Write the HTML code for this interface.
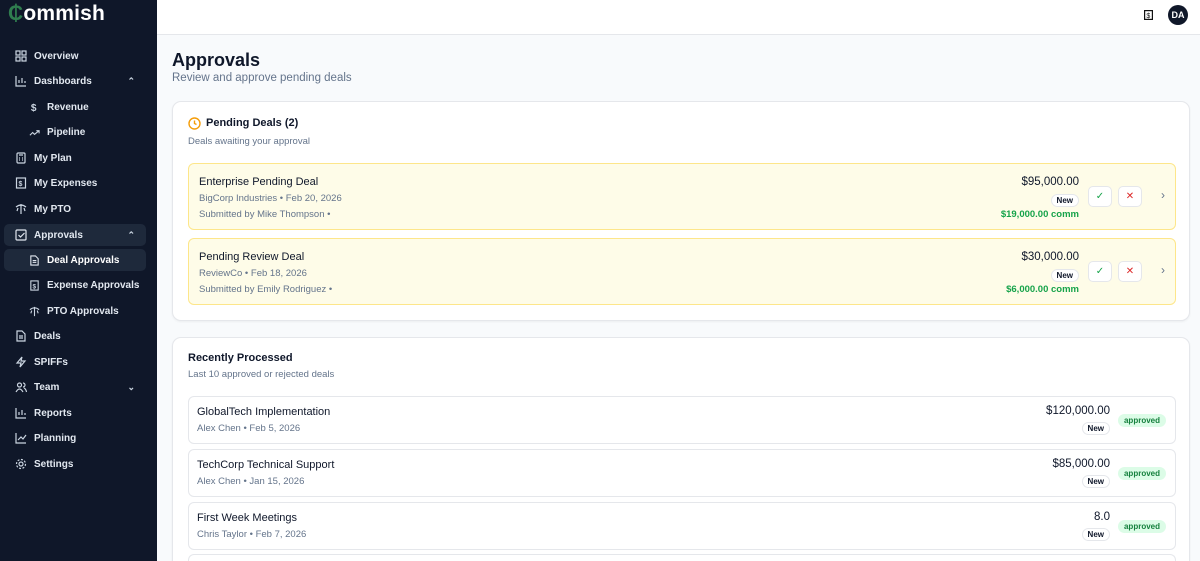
<!DOCTYPE html>
<html><head><meta charset="utf-8"><style>
*{box-sizing:border-box;margin:0;padding:0}
html{width:1200px;height:561px;overflow:hidden}
body{width:1200px;height:561px;overflow:hidden;font-family:"Liberation Sans",sans-serif;background:#f8fafc;position:relative;color:#0f172a}
.sb{position:absolute;left:0;top:0;width:157px;height:561px;background:#0f1729;color:#e2e8f0}
.logo{position:absolute;left:8px;top:2px;font-size:21px;font-weight:bold;color:#fff;letter-spacing:0.2px}
.logo span{color:#2f7d4f}
.it{position:absolute;left:4px;width:142px;height:22px;font-size:10px;font-weight:bold;display:flex;align-items:center;border-radius:5px}
.it svg{position:absolute;left:11px;width:12px;height:12px}
.it .t{position:absolute;left:30px}
.it.s svg{left:25px;width:11px;height:11px}
.it.s .t{left:43px}
.it .ch{position:absolute;right:11px;font-size:9px;color:#cbd5e1}
.act{background:#1e293b}
.hdr{position:absolute;left:157px;top:0;right:0;height:35px;background:#fff;border-bottom:1px solid #e5e7eb}
.av{position:absolute;right:12px;top:5px;width:20px;height:20px;border-radius:50%;background:#0f1729;color:#fff;font-size:9px;font-weight:bold;display:flex;align-items:center;justify-content:center}
h1{position:absolute;left:172px;top:50px;font-size:18px;font-weight:bold}
.sub{position:absolute;left:172px;top:72px;font-size:11.5px;color:#64748b}
.card{position:absolute;left:172px;width:1018px;background:#fff;border:1px solid #e5e7eb;border-radius:9px;box-shadow:0 1px 2px rgba(0,0,0,.05);overflow:hidden}
.ct{position:absolute;left:15px;font-size:11px;font-weight:bold}
.cs{position:absolute;left:15px;font-size:9.5px;color:#64748b}
.deal{position:absolute;left:15px;width:988px;height:67px;background:#fefce8;border:1px solid #fde68a;border-radius:6px}
.row{position:absolute;left:15px;width:988px;height:48px;background:#fff;border:1px solid #e5e7eb;border-radius:6px}
.nm{position:absolute;left:10px;font-size:11px}
.mt{position:absolute;left:10px;font-size:9.5px;color:#64748b}
.amt{position:absolute;font-size:11.5px;text-align:right}
.new{position:absolute;font-size:8px;font-weight:bold;border:1px solid #e5e7eb;border-radius:8px;background:#fff;padding:1px 5px;height:13px;line-height:10px}
.comm{position:absolute;font-size:9.5px;color:#16a34a;font-weight:bold}
.btn{position:absolute;width:24px;height:21px;border:1px solid #e5e7eb;border-radius:5px;background:#fff;font-size:10px;display:flex;align-items:center;justify-content:center}
.apr{position:absolute;right:9px;font-size:8px;color:#15803d;background:#dcfce7;border-radius:8px;padding:2px 6px;font-weight:bold}
</style></head><body>
<div class="sb">
<div class="logo"><span>₵</span>ommish</div>
<div class="it" style="top:45px"><svg viewBox="0 0 12 12" fill="none" stroke="#cbd5e1" stroke-width="1.2"><rect x="1" y="1" width="4" height="4"/><rect x="7" y="1" width="4" height="4"/><rect x="1" y="7" width="4" height="4"/><rect x="7" y="7" width="4" height="4"/></svg><span class="t">Overview</span></div>
<div class="it" style="top:70px"><svg viewBox="0 0 12 12" fill="none" stroke="#cbd5e1" stroke-width="1.2"><path d="M1 1v10h10M4 8V5M7 8V3M10 8V6"/></svg><span class="t">Dashboards</span><span class="ch">⌃</span></div>
<div class="it s" style="top:96px"><svg viewBox="0 0 12 12"><text x="2" y="10" font-size="11" fill="#cbd5e1">$</text></svg><span class="t">Revenue</span></div>
<div class="it s" style="top:121px"><svg viewBox="0 0 12 12" fill="none" stroke="#cbd5e1" stroke-width="1.2"><path d="M1 9l3-3 2 2 5-4M8 4h3v3"/></svg><span class="t">Pipeline</span></div>
<div class="it" style="top:147px"><svg viewBox="0 0 12 12" fill="none" stroke="#cbd5e1" stroke-width="1.2"><rect x="2" y="1" width="8" height="10" rx="1"/><path d="M4 3h4M4 6h1M7 6h1M4 8h1M7 8h1"/></svg><span class="t">My Plan</span></div>
<div class="it" style="top:172px"><svg viewBox="0 0 12 12" fill="none" stroke="#cbd5e1" stroke-width="1.2"><rect x="1.5" y="1" width="9" height="10"/><text x="3.5" y="9" font-size="7" fill="#cbd5e1" stroke="none">$</text></svg><span class="t">My Expenses</span></div>
<div class="it" style="top:198px"><svg viewBox="0 0 12 12" fill="none" stroke="#cbd5e1" stroke-width="1.2"><path d="M1 4q5-4 10 0M6 1v10M3 5l-1 3M9 5l1 3"/></svg><span class="t">My PTO</span></div>
<div class="it act" style="top:224px"><svg viewBox="0 0 12 12" fill="none" stroke="#e2e8f0" stroke-width="1.2"><rect x="1" y="1" width="10" height="10" rx="1"/><path d="M3.5 6l2 2 4-4"/></svg><span class="t">Approvals</span><span class="ch">⌃</span></div>
<div class="it s act" style="top:249px"><svg viewBox="0 0 12 12" fill="none" stroke="#e2e8f0" stroke-width="1.2"><path d="M2 1h5l3 3v7H2z M4 6h4M4 8h4"/></svg><span class="t" style="color:#fff">Deal Approvals</span></div>
<div class="it s" style="top:274px"><svg viewBox="0 0 12 12" fill="none" stroke="#cbd5e1" stroke-width="1.2"><rect x="2" y="1" width="8" height="10"/><text x="3.8" y="9" font-size="7" fill="#cbd5e1" stroke="none">$</text></svg><span class="t">Expense Approvals</span></div>
<div class="it s" style="top:300px"><svg viewBox="0 0 12 12" fill="none" stroke="#cbd5e1" stroke-width="1.2"><path d="M1 4q5-4 10 0M6 1v10M3 5l-1 3M9 5l1 3"/></svg><span class="t">PTO Approvals</span></div>
<div class="it" style="top:325px"><svg viewBox="0 0 12 12" fill="none" stroke="#cbd5e1" stroke-width="1.2"><path d="M2 1h5l3 3v7H2z M4 6h4M4 8h4"/></svg><span class="t">Deals</span></div>
<div class="it" style="top:351px"><svg viewBox="0 0 12 12" fill="none" stroke="#cbd5e1" stroke-width="1.2"><path d="M7 1L2 7h4l-1 4 5-6H6z"/></svg><span class="t">SPIFFs</span></div>
<div class="it" style="top:376px"><svg viewBox="0 0 12 12" fill="none" stroke="#cbd5e1" stroke-width="1.2"><circle cx="4.5" cy="4" r="2"/><path d="M1 11q3.5-6 7 0M8 2a2 2 0 010 4M9 7q2 1 2.5 4"/></svg><span class="t">Team</span><span class="ch">⌄</span></div>
<div class="it" style="top:402px"><svg viewBox="0 0 12 12" fill="none" stroke="#cbd5e1" stroke-width="1.2"><path d="M1 1v10h10M4 8V5M7 8V3M10 8V6"/></svg><span class="t">Reports</span></div>
<div class="it" style="top:427px"><svg viewBox="0 0 12 12" fill="none" stroke="#cbd5e1" stroke-width="1.2"><path d="M1 1v10h10M3 8l3-3 2 2 3-4"/></svg><span class="t">Planning</span></div>
<div class="it" style="top:453px"><svg viewBox="0 0 12 12" fill="none" stroke="#cbd5e1" stroke-width="1.2"><circle cx="6" cy="6" r="2"/><circle cx="6" cy="6" r="4.5" stroke-dasharray="2 1.5"/></svg><span class="t">Settings</span></div>
</div>
<div class="hdr"><svg style="position:absolute;right:47px;top:10px" width="9" height="10" viewBox="0 0 9 10" fill="none" stroke="#111" stroke-width="1.2"><rect x="0.6" y="0.6" width="7.8" height="8.8"/><text x="2.4" y="8" font-size="7" fill="#111" stroke="none">$</text></svg><div class="av">DA</div></div>
<h1>Approvals</h1>
<div class="sub">Review and approve pending deals</div>
<div class="card" style="top:101px;height:220px">
<svg style="position:absolute;left:15px;top:15px" width="13" height="13" viewBox="0 0 13 13" fill="none" stroke="#f59e0b" stroke-width="1.4"><circle cx="6.5" cy="6.5" r="5.5"/><path d="M6.5 3.5v3l2 1"/></svg>
<div class="ct" style="top:15px;left:33px">Pending Deals (2)</div>
<div class="cs" style="top:34px">Deals awaiting your approval</div>
<div class="deal" style="top:61px">
<div class="nm" style="top:12px">Enterprise Pending Deal</div>
<div class="mt" style="top:29px">BigCorp Industries • Feb 20, 2026</div>
<div class="mt" style="top:45px">Submitted by Mike Thompson •</div>
<div class="amt" style="right:96px;top:12px">$95,000.00</div>
<div class="new" style="right:96px;top:30px">New</div>
<div class="comm" style="right:96px;top:45px">$19,000.00 comm</div>
<div class="btn" style="right:63px;top:22px;color:#16a34a">✓</div>
<div class="btn" style="right:33px;top:22px;color:#dc2626">✕</div>
<div style="position:absolute;right:10px;top:24px;font-size:12px;color:#64748b">›</div>
</div>
<div class="deal" style="top:136px">
<div class="nm" style="top:12px">Pending Review Deal</div>
<div class="mt" style="top:29px">ReviewCo • Feb 18, 2026</div>
<div class="mt" style="top:45px">Submitted by Emily Rodriguez •</div>
<div class="amt" style="right:96px;top:12px">$30,000.00</div>
<div class="new" style="right:96px;top:30px">New</div>
<div class="comm" style="right:96px;top:45px">$6,000.00 comm</div>
<div class="btn" style="right:63px;top:22px;color:#16a34a">✓</div>
<div class="btn" style="right:33px;top:22px;color:#dc2626">✕</div>
<div style="position:absolute;right:10px;top:24px;font-size:12px;color:#64748b">›</div>
</div>
</div>
<div class="card" style="top:337px;height:224px;border-bottom:none;border-radius:9px 9px 0 0">
<div class="ct" style="top:14px">Recently Processed</div>
<div class="cs" style="top:31px">Last 10 approved or rejected deals</div>
<div class="row" style="top:58px"><div class="nm" style="top:9px;left:8px">GlobalTech Implementation</div><div class="mt" style="top:26px;left:8px">Alex Chen • Feb 5, 2026</div><div class="amt" style="right:65px;top:8px">$120,000.00</div><div class="new" style="right:65px;top:25px">New</div><div class="apr" style="top:17px">approved</div></div>
<div class="row" style="top:111px"><div class="nm" style="top:9px;left:8px">TechCorp Technical Support</div><div class="mt" style="top:26px;left:8px">Alex Chen • Jan 15, 2026</div><div class="amt" style="right:65px;top:8px">$85,000.00</div><div class="new" style="right:65px;top:25px">New</div><div class="apr" style="top:17px">approved</div></div>
<div class="row" style="top:164px"><div class="nm" style="top:9px;left:8px">First Week Meetings</div><div class="mt" style="top:26px;left:8px">Chris Taylor • Feb 7, 2026</div><div class="amt" style="right:65px;top:8px">8.0</div><div class="new" style="right:65px;top:25px">New</div><div class="apr" style="top:17px">approved</div></div>
<div class="row" style="top:216px;height:7px;border-bottom:none;border-radius:6px 6px 0 0"></div>
</div>
</body></html>
